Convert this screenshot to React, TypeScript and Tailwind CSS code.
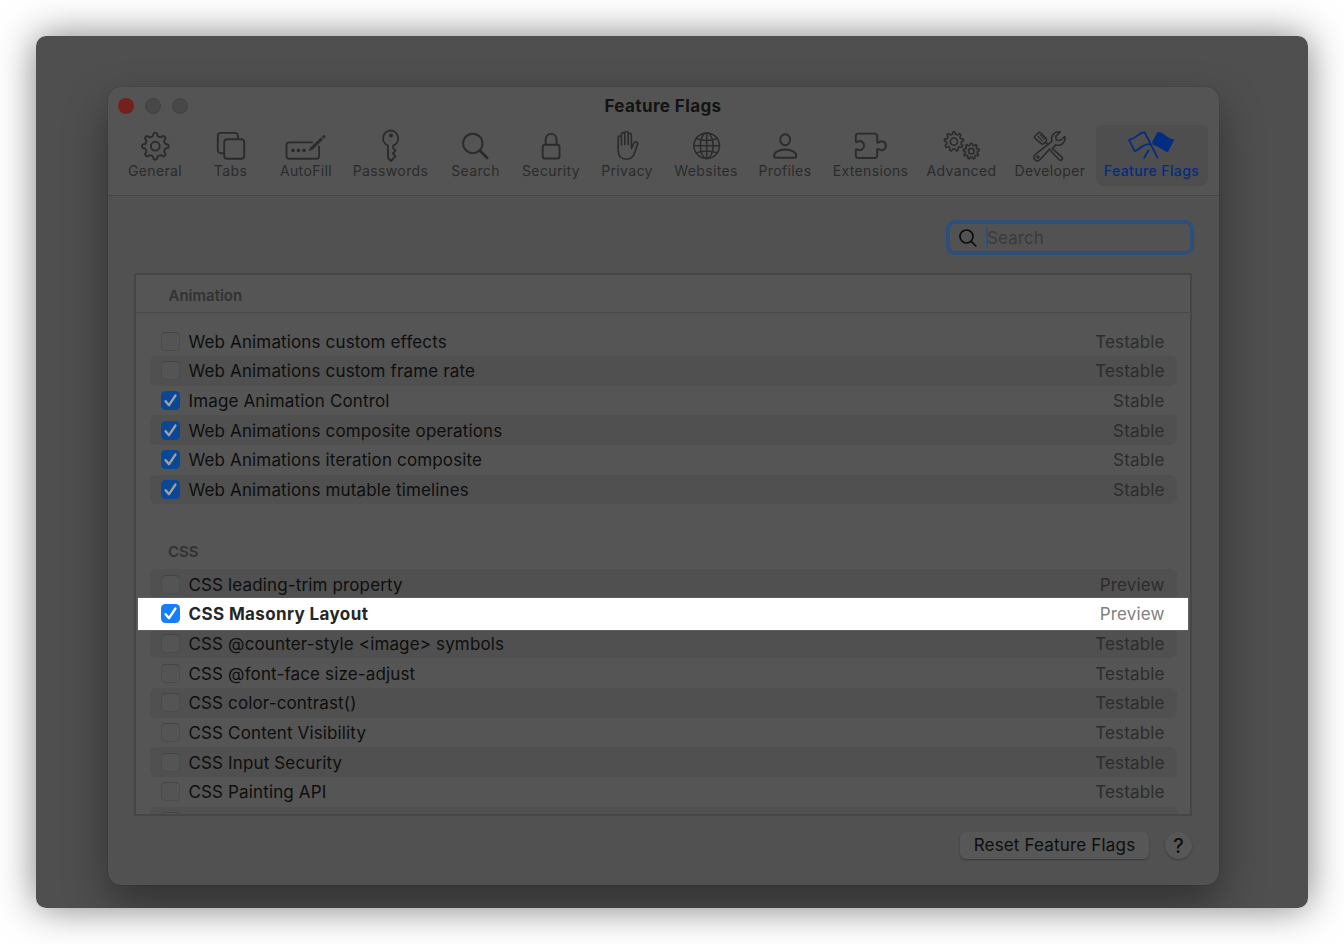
import React from "react";

function gear(cx: number, cy: number, R: number, r: number, n: number) {
  const pts: string[] = [];
  const step = (Math.PI * 2) / n;
  for (let i = 0; i < n; i++) {
    const a = -Math.PI / 2 + i * step;
    const p = (ang: number, rad: number) =>
      (cx + Math.cos(ang) * rad).toFixed(2) + " " + (cy + Math.sin(ang) * rad).toFixed(2);
    pts.push((i === 0 ? "M" : "L") + p(a - step * 0.27, r));
    pts.push("L" + p(a - step * 0.2, R * 0.93));
    pts.push("Q" + p(a - step * 0.17, R) + " " + p(a - step * 0.07, R));
    pts.push("L" + p(a + step * 0.07, R));
    pts.push("Q" + p(a + step * 0.17, R) + " " + p(a + step * 0.2, R * 0.93));
    pts.push("L" + p(a + step * 0.27, r));
    pts.push("Q" + p(a + step * 0.5, r * 0.9) + " " + p(a + step * 0.73, r));
  }
  return pts.join("") + "Z";
}

const icons: Record<string, React.ReactNode> = {
  General: (
    <>
      <path d={gear(24.3, 17.2, 13.3, 10.6, 8)} />
      <circle cx="24.3" cy="17.2" r="4.4" />
    </>
  ),
  Tabs: (
    <>
      <path d="M16.7 24.3H13.8a3 3 0 0 1-3-3V6.9a3 3 0 0 1 3-3h14.2a3 3 0 0 1 3 3v3" />
      <rect x="17.2" y="10.3" width="20" height="19.4" rx="3" />
    </>
  ),
  AutoFill: (
    <>
      <path d="M30 13.4H7.300a2.800 2.800 0 0 0-2.800 2.800V27a2.800 2.800 0 0 0 2.800 2.800h27a2.800 2.800 0 0 0 2.800-2.800V17.500" />
      <g fill="currentColor" stroke="none">
        <circle cx="11" cy="21.400" r="1.800" />
        <circle cx="16.500" cy="21.400" r="1.800" />
        <circle cx="22" cy="21.400" r="1.800" />
        <path d="M26.700 22.300l1.700-3.700 10.500-10 2 2-10.400 10.200z" />
        <path d="M39.800 7.800l1.500-1.300a1.200 1.200 0 0 1 1.900 1.700l-1.400 1.500z" />
      </g>
    </>
  ),
  Passwords: (
    <>
      <path d="M24 1.500a7.900 7.900 0 0 0-3 15.200V29l3 3 4.500-4.600-2.600-3 2.600-2.700-2.300-2.600v-2.400A7.900 7.900 0 0 0 24 1.500z" />
      <circle cx="24" cy="6.600" r="2" fill="currentColor" stroke="none" />
    </>
  ),
  Search: (
    <>
      <circle cx="20.800" cy="14.400" r="9.700" />
      <path d="M28 21.700l7 7" strokeWidth="2.900" />
    </>
  ),
  Security: (
    <>
      <rect x="15.700" y="15.700" width="16.800" height="13.800" rx="2.300" />
      <path d="M18.600 15.500v-4.400c0-3.600 2.200-6.200 5.500-6.200s5.500 2.600 5.500 6.200v4.400" />
    </>
  ),
  Privacy: (
    <path
      strokeWidth="1.600"
      d="M15.200 17.500V8.600a1.600 1.600 0 0 1 3.200 0V16V5.300a1.700 1.700 0 0 1 3.400 0V15.500V4.200a1.700 1.700 0 0 1 3.400 0V15.500V6a1.600 1.600 0 0 1 3.200 0V19.600L31 14c1-2 4.300-1 3.600 1.200L31.800 23C30.500 27.500 28 30.200 23.700 30.200C18.200 30.200 15.200 27.200 15.200 21.700V17"
    />
  ),
  Websites: (
    <g strokeWidth="1.500">
      <circle cx="24.700" cy="16.700" r="12.800" />
      <ellipse cx="24.700" cy="16.700" rx="6.400" ry="12.800" />
      <path d="M24.700 3.900v25.600M11.900 16.700h25.600M14.200 9.500q10.500 4 21 0M14.200 23.900q10.500-4 21 0" />
    </g>
  ),
  Profiles: (
    <>
      <ellipse cx="24.200" cy="10.800" rx="5" ry="5.500" />
      <path d="M15 28.700c-1.300 0-2-.7-2-1.900 0-3.200 4.500-6.300 11.200-6.300S35.400 23.600 35.400 26.800c0 1.200-.7 1.900-2 1.900z" />
    </>
  ),
  Extensions: (
    <path d="M11.300 4.600h16.400a2.500 2.500 0 0 1 2.500 2.500v5.800c0 .8.700 1.100 1.300.6 3.300-2.500 7.300-.7 7.300 3.300s-4 5.800-7.300 3.300c-.6-.5-1.300-.2-1.300.6v5.800a2.500 2.500 0 0 1-2.500 2.500H11.300a2.500 2.500 0 0 1-2.500-2.500v-5.600c0-.8.7-1 1.300-.6 3.300 2.400 7-.2 7-3.700s-3.700-6-7-3.600c-.6.4-1.300.1-1.300-.7V7.100a2.500 2.500 0 0 1 2.500-2.500z" />
  ),
  Advanced: (
    <g strokeWidth="1.600">
      <path d={gear(15.900, 12.600, 9.700, 7.700, 9)} />
      <circle cx="15.900" cy="12.600" r="3.600" />
      <path d={gear(33.300, 22.200, 8, 6.300, 9)} />
      <circle cx="33.300" cy="22.200" r="2.800" />
    </g>
  ),
  Developer: (
    <g strokeWidth="1.600" transform="translate(-.5 -.6)">
      <path d="M20.700 17.500l-10.800 8.400a3.600 3.600 0 1 0 5 5L24.300 20.500" />
      <path d="M20.700 17.500l5.700-4.600c-1.400-5.300 2.300-10.300 8.300-9.400l-4.500 4.500 .6 3.600 3.800.5 4.700-4c1.200 6-4.300 10-9.100 8.400l-3.500 4" />
      <path d="M9.400 7.900l3.600-3.600c.7-.7 1.500-.7 2.200 0l5.800 6.200c.8 2.200-3 6-5 5L9.400 9.700c-.6-.6-.6-1.200 0-1.800z" />
      <path d="M12.600 8l4.600 4.700M14.700 6.400l4.200 4.300" strokeWidth="1.200" />
      <path d="M20.300 14l2.400 2.200M27.500 20.700l8.800 8a1.900 1.900 0 0 1-2.700 2.700l-8.400-9" />
      <circle cx="12.300" cy="28.600" r=".9" />
    </g>
  ),
  "Feature Flags": (
    <g strokeWidth="1.700" transform="translate(-.7 -.7)">
      <path d="M17.500 4.200L30.200 29.300" />
      <path d="M17.500 4.200C12 3.500 9 10.500 1.600 11.500L7.400 22.800C13 21.500 15.500 15 22.500 16" />
      <path d="M21.300 22L16.900 29.500" />
      <path d="M30.600 4.200C36 3.800 39 10.800 46.400 11.500L40.300 23C34.500 21.800 32 16.800 26.200 16L25.400 14z" fill="currentColor" strokeWidth="1.200" />
    </g>
  ),
};

const tabs = [
  { name: "General", w: "w-[76px]" },
  { name: "Tabs", w: "w-[75px]" },
  { name: "AutoFill", w: "w-[76px]" },
  { name: "Passwords", w: "w-[93px]" },
  { name: "Search", w: "w-[77px]" },
  { name: "Security", w: "w-[74px]" },
  { name: "Privacy", w: "w-[78px]" },
  { name: "Websites", w: "w-[80px]" },
  { name: "Profiles", w: "w-[78px]" },
  { name: "Extensions", w: "w-[93px]" },
  { name: "Advanced", w: "w-[89px]" },
  { name: "Developer", w: "w-[88px]" },
  { name: "Feature Flags", w: "w-[115px]" },
];

type Flag = { name: string; status: string; on?: boolean; lit?: boolean };

const animation: Flag[] = [
  { name: "Web Animations custom effects", status: "Testable" },
  { name: "Web Animations custom frame rate", status: "Testable" },
  { name: "Image Animation Control", status: "Stable", on: true },
  { name: "Web Animations composite operations", status: "Stable", on: true },
  { name: "Web Animations iteration composite", status: "Stable", on: true },
  { name: "Web Animations mutable timelines", status: "Stable", on: true },
];

const css: Flag[] = [
  { name: "CSS leading-trim property", status: "Preview" },
  { name: "CSS Masonry Layout", status: "Preview", on: true, lit: true },
  { name: "CSS @counter-style <image> symbols", status: "Testable" },
  { name: "CSS @font-face size-adjust", status: "Testable" },
  { name: "CSS color-contrast()", status: "Testable" },
  { name: "CSS Content Visibility", status: "Testable" },
  { name: "CSS Input Security", status: "Testable" },
  { name: "CSS Painting API", status: "Testable" },
  { name: "", status: "" },
];

function Checkbox({ on, lit }: { on?: boolean; lit?: boolean }) {
  if (!on)
    return (
      <span className="size-[19px] shrink-0 rounded-[4.5px] border border-[#4b4b4b] border-t-[#444444] bg-[#545454]" />
    );
  return (
    <span
      className={`flex size-[19px] shrink-0 items-center justify-center rounded-[4.5px] ${lit ? "bg-[#157efb] text-white" : "bg-[#0a4795] text-[#a0a0a0]"}`}
    >
      <svg width="19" height="19" viewBox="0 0 19 19" fill="none" stroke="currentColor" strokeWidth="2.400" strokeLinecap="round" strokeLinejoin="round">
        <path d="M4.600 10.200l3.400 4 6.400-9.600" />
      </svg>
    </span>
  );
}

function Row({ flag, striped }: { flag: Flag; striped: boolean }) {
  if (flag.lit)
    return (
      <div className="relative z-10 -my-[1px] ml-[1.5px] mr-[2px] flex h-[31.7px] shrink-0 items-center bg-white pl-[23.5px] pr-[23.5px] text-[17px] shadow-[0_0_1px_#999]">
        <Checkbox on lit />
        <span className="ml-[8.5px] flex-1 pt-[1.5px] font-bold tracking-[0.38px] text-[#262626]">{flag.name}</span>
        <span className="pt-[1.5px] tracking-[0.15px] text-[#808080]">{flag.status}</span>
      </div>
    );
  return (
    <div
      className={`ml-[14px] mr-[13px] flex h-[29.7px] shrink-0 items-center rounded-[6px] pl-[11px] pr-[12.5px] text-[17px] tracking-[0.14px] ${striped ? "bg-[#505050]" : ""}`}
    >
      <Checkbox on={flag.on} />
      <span className="ml-[8.5px] flex-1 pt-[2.5px] text-[#0e0e0e]">{flag.name}</span>
      <span className="pt-[2.5px] text-[#2c2c2c]">{flag.status}</span>
    </div>
  );
}

export default function App() {
  return (
    <div className="h-[944px] w-[1344px] overflow-hidden bg-white p-9 font-['Inter',sans-serif]">
      <div className="h-[872px] w-[1272px] rounded-[10px] shadow-[0_0_38px_rgba(0,0,0,0.5)]">
        <div className="h-full w-full overflow-hidden rounded-[10px] bg-[#4f4f4f] pl-[71.5px] pt-[51px]">
          <div className="flex h-[798px] w-[1111px] flex-col overflow-hidden rounded-[13px] bg-[#515151] shadow-[0_0_1px_#222,0_20px_44px_rgba(0,0,0,0.38)]">
            <div className="flex h-[109px] shrink-0 flex-col border-b border-[#444] bg-[#545454]">
              <div className="flex h-[37px] items-center">
                <div className="flex w-[111px] gap-[11px] pl-[10.5px]">
                  <span className="size-4 rounded-full bg-[#74201e]" />
                  <span className="size-4 rounded-full border border-[#424242] bg-[#484848]" />
                  <span className="size-4 rounded-full border border-[#424242] bg-[#484848]" />
                </div>
                <h1 className="w-[889px] pt-[2px] text-center text-[17px] font-bold tracking-[0.4px] text-[#131313]">Feature Flags</h1>
              </div>
              <div className="flex pl-[9.5px] pt-px">
                {tabs.map(({ name, w }) => (
                  <div key={name} className={`flex justify-center ${w}`}>
                    <div
                      className={`flex h-[61px] flex-col items-center rounded-[8px] pt-[3.5px] ${name === "Feature Flags" ? "w-[112px] bg-[#4e4e4e] text-[#032d80]" : "w-full text-[#2b2b2b]"}`}
                    >
                      <svg width="48" height="34" viewBox="0 0 48 34" fill="none" stroke="currentColor" strokeWidth="1.900" strokeLinecap="round" strokeLinejoin="round">
                        {icons[name]}
                      </svg>
                      <span className={`mt-[0.5px] whitespace-nowrap text-[14px] leading-4 ${name === "Feature Flags" ? "font-medium tracking-[0.4px]" : "tracking-[0.37px]"}`}>{name}</span>
                    </div>
                  </div>
                ))}
              </div>
            </div>
            <div className="flex h-[77px] shrink-0 justify-end pr-[24.5px] pt-[24px]">
              <div className="flex h-[35px] w-[248px] items-center rounded-[9px] border-[4px] border-[#2c4f7d] bg-[#525252] pl-[9px]">
                <svg width="18" height="18" viewBox="0 0 18 18" fill="none" stroke="#0c0c0c" strokeWidth="1.700" strokeLinecap="round">
                  <circle cx="7.500" cy="7.500" r="6.500" />
                  <path d="M12.300 12.300l4.500 4.700" />
                </svg>
                <span className="ml-[9px] h-[21px] w-[2px] bg-[#2c4f7d]" />
                <span className="-ml-px pt-[1.5px] text-[17px] tracking-[0.1px] text-[#3a3a3a]">Search</span>
              </div>
            </div>
            <div className="ml-[26.5px] flex h-[543px] w-[1058px] shrink-0 flex-col overflow-hidden border-2 border-[#464646] bg-[#555555]">
              <div className="flex h-[38px] shrink-0 items-center border-b border-[#4a4a4a] pl-[32.5px] pt-[4.5px] text-[15px] font-semibold text-[#323232]">Animation</div>
              <div className="h-[13.3px] shrink-0" />
              {animation.map((f, i) => (
                <Row key={i} flag={f} striped={i % 2 === 1} />
              ))}
              <div className="flex h-[64.8px] shrink-0 items-center pl-[32px] pt-[30.5px] text-[15px] font-semibold text-[#323232]">CSS</div>
              {css.map((f, i) => (
                <Row key={i} flag={f} striped={i % 2 === 0} />
              ))}
            </div>
            <div className="flex justify-end gap-[16px] pr-[26.5px] pt-[16px]">
              <button className="flex h-[27px] w-[189px] items-center justify-center whitespace-nowrap rounded-[6px] bg-[#575757] text-[17px] tracking-[0.17px] text-[#0e0e0e] shadow-[0_1px_2px_#3a3a3a]">Reset Feature Flags</button>
              <button className="flex size-[27px] items-center justify-center rounded-full bg-[#575757] text-[20px] font-medium text-[#0e0e0e] shadow-[0_1px_2px_#3a3a3a]">?</button>
            </div>
          </div>
        </div>
      </div>
    </div>
  );
}
